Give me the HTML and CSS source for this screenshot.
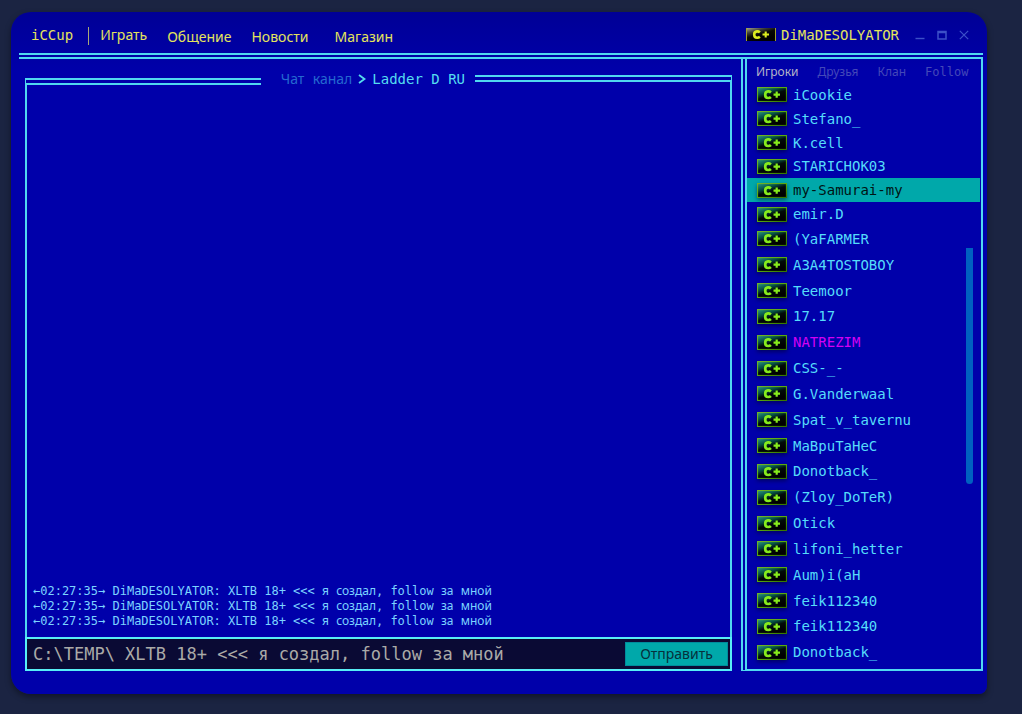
FILE: index.html
```
<!DOCTYPE html>
<html lang="ru">
<head>
<meta charset="utf-8">
<title>iCCup</title>
<link rel="stylesheet" href="styles.css">
</head>
<body>
<svg class="defs" aria-hidden="true">
  <defs>
    <linearGradient id="glossG" x1="0" y1="0" x2="0.6" y2="0.9">
      <stop offset="0" stop-color="#2a9a80"/><stop offset="0.4" stop-color="#065044"/><stop offset="0.65" stop-color="#010a08"/><stop offset="1" stop-color="#000"/>
    </linearGradient>
    <linearGradient id="glossY" x1="0" y1="0" x2="0.6" y2="0.9">
      <stop offset="0" stop-color="#a8a890"/><stop offset="0.35" stop-color="#3c3c34"/><stop offset="0.6" stop-color="#080804"/><stop offset="1" stop-color="#000"/>
    </linearGradient>
    <linearGradient id="edgeG" x1="0" y1="0" x2="1" y2="1">
      <stop offset="0" stop-color="#70b428"/><stop offset="0.5" stop-color="#58a80c"/><stop offset="1" stop-color="#347400"/>
    </linearGradient>
  </defs>
  <symbol id="rank" viewBox="0 0 30 15">
    <rect x="0.5" y="0.5" width="29" height="14" fill="url(#glossG)" stroke="url(#edgeG)" stroke-width="1.2"/>
    <path d="M13.9 5.4C13 4.6 12 4.3 11 4.4 9 4.6 8.2 6.1 8.2 7.7 8.2 9.7 9.3 11 11.2 11 12.3 11 13.2 10.7 13.9 10" fill="none" stroke="#86ec1c" stroke-width="2.7"/>
    <path d="M16.5 7.6H23M19.7 4.5V10.7" fill="none" stroke="#86ec1c" stroke-width="2.2"/>
  </symbol>
  <symbol id="rank-own" viewBox="0 0 30 13">
    <rect width="30" height="13" fill="url(#glossY)"/>
    <path d="M0.5 0V13M29.5 0V13" stroke="#a0a028"/>
    <path d="M13.9 4.4C13 3.6 12 3.3 11 3.4 9 3.6 8.2 5 8.2 6.5 8.2 8.5 9.3 9.7 11.2 9.7 12.3 9.7 13.2 9.4 13.9 8.8" fill="none" stroke="#dcec20" stroke-width="2.6"/>
    <path d="M16.5 6.5H23M19.7 3.4V9.6" fill="none" stroke="#dcec20" stroke-width="2.1"/>
  </symbol>
</svg>

<div class="window">
  <header class="topbar">
    <span class="brand">iCCup</span>
    <span class="divider"></span>
    <nav class="menu">
      <a class="menu-link menu-link-active" href="#play">Играть</a>
      <a class="menu-link" href="#talk">Общение</a>
      <a class="menu-link menu-link-wide" href="#news">Новости</a>
      <a class="menu-link" href="#shop">Магазин</a>
    </nav>
    <div class="account">
      <svg class="rank-own"><use href="#rank-own"/></svg>
      <span class="account-name">DiMaDESOLYATOR</span>
    </div>
    <div class="controls">
      <button class="control" type="button" aria-label="Свернуть"><svg viewBox="0 0 10 10"><path d="M0.5 8.5H9.5" stroke-width="1.4"/></svg></button>
      <button class="control" type="button" aria-label="Развернуть"><svg viewBox="0 0 10 10"><path d="M1 1.5H9V9H1ZM1 2.4H9" stroke-width="1.5"/></svg></button>
      <button class="control" type="button" aria-label="Закрыть"><svg viewBox="0 0 10 10"><path d="M0.8 0.8L9.2 9.2M9.2 0.8L0.8 9.2" stroke-width="1.2"/></svg></button>
    </div>
  </header>

  <main class="content">
    <section class="chat">
      <div class="chat-head">
        <div class="rule rule-left"></div>
        <h1 class="channel">
          <span class="channel-kind">Чат<span class="mono"> </span>канал</span>
          <svg class="chevron" viewBox="0 0 8 10"><path d="M1 1L6.5 5L1 9" fill="none" stroke="#55ddee" stroke-width="1.8"/></svg>
          <span class="channel-name">Ladder D RU</span>
        </h1>
        <div class="rule rule-right"></div>
      </div>
      <div class="log">
        <p class="line">←02:27:35→ DiMaDESOLYATOR: XLTB 18+ &lt;&lt;&lt; <span class="cyr">я</span> <span class="cyr">создал</span>, follow <span class="cyr">за</span> <span class="cyr">мной</span></p>
        <p class="line">←02:27:35→ DiMaDESOLYATOR: XLTB 18+ &lt;&lt;&lt; <span class="cyr">я</span> <span class="cyr">создал</span>, follow <span class="cyr">за</span> <span class="cyr">мной</span></p>
        <p class="line">←02:27:35→ DiMaDESOLYATOR: XLTB 18+ &lt;&lt;&lt; <span class="cyr">я</span> <span class="cyr">создал</span>, follow <span class="cyr">за</span> <span class="cyr">мной</span></p>
      </div>
      <form class="composer">
        <input class="message" type="text" aria-label="Сообщение" value="C:\TEMP\ XLTB 18+ &lt;&lt;&lt; я создал, follow за мной">
        <button class="send" type="button">Отправить</button>
      </form>
    </section>

    <aside class="side">
      <div class="tabs">
        <button class="tab tab-active" type="button">Игроки</button>
        <button class="tab" type="button">Друзья</button>
        <button class="tab" type="button">Клан</button>
        <button class="tab tab-mono" type="button">Follow</button>
      </div>
      <ul class="players">
        <li class="player"><svg class="rank"><use href="#rank"/></svg>iCookie</li>
        <li class="player"><svg class="rank"><use href="#rank"/></svg>Stefano_</li>
        <li class="player"><svg class="rank"><use href="#rank"/></svg>K.cell</li>
        <li class="player"><svg class="rank"><use href="#rank"/></svg>STARICHOK03</li>
        <li class="player player-selected"><svg class="rank"><use href="#rank"/></svg>my-Samurai-my</li>
        <li class="player"><svg class="rank"><use href="#rank"/></svg>emir.D</li>
        <li class="player player-tall"><svg class="rank"><use href="#rank"/></svg>(YaFARMER</li>
        <li class="player player-tall"><svg class="rank"><use href="#rank"/></svg>A3A4TOSTOBOY</li>
        <li class="player player-tall"><svg class="rank"><use href="#rank"/></svg>Teemoor</li>
        <li class="player player-tall"><svg class="rank"><use href="#rank"/></svg>17.17</li>
        <li class="player player-tall player-admin"><svg class="rank"><use href="#rank"/></svg>NATREZIM</li>
        <li class="player player-tall"><svg class="rank"><use href="#rank"/></svg>CSS-_-</li>
        <li class="player player-tall"><svg class="rank"><use href="#rank"/></svg>G.Vanderwaal</li>
        <li class="player player-tall"><svg class="rank"><use href="#rank"/></svg>Spat_v_tavernu</li>
        <li class="player player-tall"><svg class="rank"><use href="#rank"/></svg>MaBpuTaHeC</li>
        <li class="player player-tall"><svg class="rank"><use href="#rank"/></svg>Donotback_</li>
        <li class="player player-tall"><svg class="rank"><use href="#rank"/></svg>(Zloy_DoTeR)</li>
        <li class="player player-tall"><svg class="rank"><use href="#rank"/></svg>Otick</li>
        <li class="player player-tall"><svg class="rank"><use href="#rank"/></svg>lifoni_hetter</li>
        <li class="player player-tall"><svg class="rank"><use href="#rank"/></svg>Aum)i(aH</li>
        <li class="player player-tall"><svg class="rank"><use href="#rank"/></svg>feik112340</li>
        <li class="player player-tall"><svg class="rank"><use href="#rank"/></svg>feik112340</li>
        <li class="player player-tall"><svg class="rank"><use href="#rank"/></svg>Donotback_</li>
      </ul>
      <div class="scroll-thumb"></div>
    </aside>
  </main>
</div>
</body>
</html>
```

FILE: styles.css
```
:root {
  --line: #50d8f0;
  --mono: "DejaVu Sans Mono", monospace;
  --sans: "Noto Sans", sans-serif;
}

* { box-sizing: border-box; }

body {
  margin: 0;
  min-height: 100vh;
  display: flex;
  padding: 12px 35px 20px 11px;
  background: #1b2442;
  font: 14px/20px var(--mono);
}

button, input {
  margin: 0;
  padding: 0;
  border: 0;
  background: none;
  color: inherit;
  font: inherit;
}

.defs { position: absolute; width: 0; height: 0; }

.window {
  flex: 1;
  display: flex;
  flex-direction: column;
  padding: 0 4px 23px 8px;
  border-radius: 20px 20px 8px 20px;
  background: linear-gradient(#000096, #0000aa 60px);
  box-shadow: 0 3px 6px rgba(0, 0, 0, 0.4);
}

.topbar {
  height: 47px;
  display: flex;
  align-items: center;
  padding: 4px 14px 0 12px;
  border-bottom: 6px double var(--line);
  color: #e4e45c;
}

.divider {
  width: 1px;
  height: 18px;
  margin: 2px 11px 0 15px;
  background: #a8a878;
}

.menu { flex: 1; display: flex; align-items: center; gap: 20px; }
.menu-link { margin-top: 4px; color: inherit; font-family: var(--sans); text-decoration: none; }
.menu-link-active { margin-top: 0; }
.menu-link-wide { margin-right: 6px; }

.account { display: flex; align-items: center; gap: 5px; }
.rank-own { width: 30px; height: 13px; }

.controls { display: flex; gap: 12px; margin-left: 16px; }
.control { width: 10px; height: 10px; display: flex; }
.control svg { width: 10px; height: 10px; fill: none; stroke: #3c50c8; }

.content { flex: 1; display: flex; gap: 9px; padding-left: 6px; }

.chat { flex: 1; min-width: 0; display: flex; flex-direction: column; padding-top: 11px; }
.chat-head { height: 18px; display: flex; }

.rule { border-top: 7px double var(--line); }
.rule-left { flex: 11; margin-top: 8px; border-left: 2px solid var(--line); }
.rule-right { flex: 12; margin-top: 5px; border-right: 2px solid var(--line); }

.channel {
  margin: 0;
  padding: 0 10px 0 20px;
  display: flex;
  align-items: center;
  gap: 6px;
  font-size: 14px;
  font-weight: 400;
  line-height: 18px;
  white-space: nowrap;
  color: #55ddf0;
}
.channel-kind { font-family: var(--sans); color: #2469d0; }
.mono { font-family: var(--mono); }
.chevron { width: 8px; height: 10px; }

.log {
  flex: 1;
  display: flex;
  flex-direction: column;
  justify-content: flex-end;
  padding: 0 6px 8px;
  border: solid var(--line);
  border-width: 0 2px;
}
.line { height: 15px; margin: 0; font-size: 12px; line-height: 15px; color: #7cd4ff; }
.cyr { font-family: var(--sans); line-height: 1; }

.composer {
  height: 34px;
  display: flex;
  align-items: center;
  padding: 0 2px 0 6px;
  border: 2px solid #58eef6;
  background: #0a0a34;
}
.message { flex: 1; min-width: 0; height: 28px; font-size: 17px; color: #aaaaa8; outline: 0; }
.send {
  width: 103px;
  height: 24px;
  border: 1px solid #008c9c;
  background: #00a8aa;
  font-family: var(--sans);
  color: #06303c;
}

.side {
  position: relative;
  width: 242px;
  display: flex;
  flex-direction: column;
  padding: 3px 1px 4px 0;
  border: solid var(--line);
  border-width: 0 2px 2px 0;
  border-left: 6px double var(--line);
}

.tabs { display: flex; gap: 19px; padding-left: 9px; font-size: 12px; color: #4448b8; }
.tab { font-family: var(--sans); white-space: nowrap; }
.tab-active { color: #b4b4c8; }
.tab-mono { font-family: var(--mono); }

.players {
  flex: 1;
  display: flex;
  flex-direction: column;
  margin: 1px 0 0;
  padding: 0;
  list-style: none;
}
.player {
  flex: 12 1 0;
  display: flex;
  align-items: center;
  gap: 6px;
  padding-left: 10px;
  line-height: 18px;
  color: #55dcfa;
}
.player-tall { flex-grow: 13; }
.player-selected { background: #00a8aa; color: #001414; }
.player-admin { color: #d400f4; }
.rank { width: 30px; height: 15px; filter: drop-shadow(0 2px 2px rgba(0, 0, 30, 0.5)); }

.scroll-thumb {
  position: absolute;
  top: 31%;
  right: 8px;
  width: 7px;
  height: 236px;
  border-radius: 0 0 4px 4px;
  background: #0060c0;
}
```
